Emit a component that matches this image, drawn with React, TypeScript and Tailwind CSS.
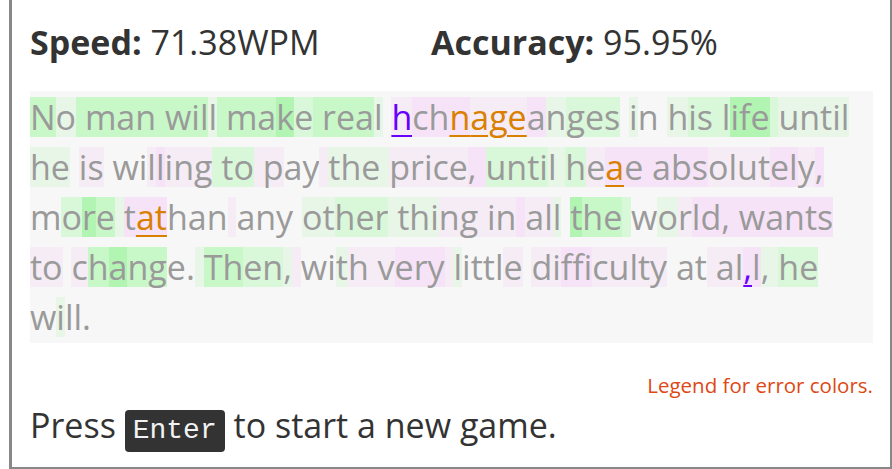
type Seg = [string, string, string?];

const BG: Record<string, string> = {
  G: "bg-[#c8f7c8]",
  D: "bg-[#b2f4b2]",
  l: "bg-[#d9f7d9]",
  L: "bg-[#e8f6e8]",
  P: "bg-[#f7e3f7]",
  p: "bg-[#f5ecf5]",
  "": "",
};

const ERR: Record<string, string> = {
  v: "text-[#6a00ff] underline decoration-2 underline-offset-[5px]",
  o: "text-[#d98000] underline decoration-2 underline-offset-[5px]",
};

const lines: Seg[][] = [
  [
    ["N", "G"], ["o", "L"], [" man wil", "G"], ["l", "L"], [" ma", "G"], ["k", "D"], ["e", "l"],
    [" rea", "G"], ["l", "L"], [" ", ""], ["h", "p", "v"], ["ch", "P"], ["n", "P", "o"], ["age", "p", "o"],
    ["a", "P"], ["n", "L"], ["ges", "l"], [" ", ""], ["i", "L"], ["n", ""], [" ", ""], ["h", "L"],
    ["is l", "l"], ["ife", "D"], [" ", "l"], ["until", "L"],
  ],
  [
    ["he", "L"], [" ", ""], ["is", "p"], [" wi", ""], ["l", "p"], ["l", "P"], ["ing", "p"], [" to", "l"],
    [" p", "p"], ["ay", ""], [" ", "p"], ["the ", "L"], ["pri", "p"], ["ce", "p"], [", ", "P"],
    ["unti", "l"], ["l ", "L"], ["h", "l"], ["e", "p"], ["a", "P", "o"], ["e abs", "P"], ["olut", "p"],
    ["el", "P"], ["y", "p"], [",", "P"],
  ],
  [
    ["m", ""], ["o", "l"], ["r", "D"], ["e", "G"], [" ", "L"], ["t", "P"], ["at", "P", "o"], ["han", ""],
    [" ", "p"], ["any", ""], [" ", ""], ["ot", "L"], ["her", "l"], [" thi", "L"], ["ng", "p"],
    [" in", "p"], [" ", "P"], ["al", "p"], ["l", "L"], [" ", ""], ["t", "D"], ["he", "G"], [" ", "l"],
    ["w", ""], ["o", "L"], ["r", "p"], ["ld,", "P"], [" wants", "P"],
  ],
  [
    ["to", "p"], [" ", ""], ["c", "p"], ["h", "G"], ["a", "D"], ["ng", "G"], ["e.", ""], [" ", "L"],
    ["Th", "G"], ["en", "l"], [",", "L"], [" ", "p"], ["wi", ""], ["t", "L"], ["h v", "p"], ["ery", "P"],
    [" ", "p"], ["l", "L"], ["ittl", ""], ["e", "p"], [" ", ""], ["di", "p"], ["ffi", "P"], ["culty", "p"],
    [" at", ""], [" ", "p"], ["al", "p"], [",", "P", "v"], ["l", "P"], [",", "L"], [" ", "L"], ["he", "l"],
  ],
  [["w", ""], ["i", "L"], ["ll.", ""]],
];

const font = { fontFamily: "'Open Sans', sans-serif" };

export default function App() {
  return (
    <div className="w-[892px] h-[469px] bg-white overflow-hidden" style={font}>
      <div className="ml-[9px] h-full border-l-[3px] border-r-2 border-b-2 border-[#888] pl-[18px] pr-[17px] flex flex-col">
        <div className="flex pt-[20px] h-[91px] text-[34px] leading-[44px] text-[#333]">
          <div className="w-[401px]">
            <span className="font-bold">Speed:</span> 71.38WPM
          </div>
          <div>
            <span className="font-bold">Accuracy:</span> 95.95%
          </div>
        </div>

        <div className="bg-[#f7f7f7] pt-px h-[252px] text-[34px] leading-[50px] text-[#9a9a9a]">
          {lines.map((line, i) => (
            <div key={i} className="whitespace-pre">
              {line.map(([t, c, e], j) => (
                <span key={j} className={`inline-block leading-[40px] ${BG[c]} ${e ? ERR[e] : ""}`}>
                  {t}
                </span>
              ))}
            </div>
          ))}
        </div>

        <div className="mt-[30px] text-right text-[20.5px] leading-6 text-[#dd4814]">
          Legend for error colors.
        </div>

        <div className="mt-[6px] text-[34px] leading-[44px] text-[#333]">
          Press{" "}
          <kbd className="inline-block rounded-[4px] bg-[#333] px-2 text-[#f2f2f2] leading-[42px] font-[Liberation_Mono,monospace] text-[28px]">
            Enter
          </kbd>{" "}
          to start a new game.
        </div>
      </div>
    </div>
  );
}
